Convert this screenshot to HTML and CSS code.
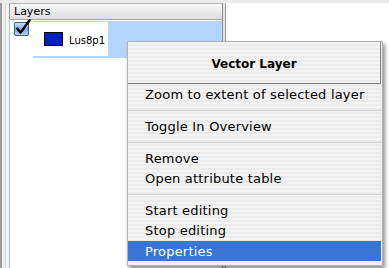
FILE: index.html
```html
<!DOCTYPE html>
<html>
<head>
<meta charset="utf-8">
<link rel="stylesheet" href="styles.css">
</head>
<body>
<div class="screen">
  <div class="topbar"></div>
  <div class="main">
    <div class="edge"></div>
    <div class="panel">
      <div class="panel-head">Layers</div>
      <div class="panel-body">
        <div class="tree-row">
          <svg class="check" width="19" height="19" viewBox="0 0 19 19">
            <defs>
              <linearGradient id="cb" x1="0" y1="0" x2="0" y2="1">
                <stop offset="0" stop-color="#d6e6fa"/>
                <stop offset="0.5" stop-color="#7eaae4"/>
                <stop offset="1" stop-color="#b9d6f6"/>
              </linearGradient>
            </defs>
            <rect x="0.5" y="3.5" width="14" height="13" rx="1.5" fill="url(#cb)" stroke="#3d5a86"/>
            <path d="M3.2 9.6 L6.6 13.6 L15.6 1.2" fill="none" stroke="#000" stroke-width="2.4" stroke-linecap="round" stroke-linejoin="round"/>
          </svg>
          <div class="layer-sel">
            <div class="layer-item">
              <span class="swatch"></span>
              <span class="label">Lus8p1</span>
            </div>
          </div>
        </div>
      </div>
    </div>
    <div class="splitter"></div>
    <div class="canvas"></div>
  </div>

  <div class="menu">
    <div class="menu-title">Vector Layer</div>
    <div class="menu-item">Zoom to extent of selected layer</div>
    <div class="menu-sep"></div>
    <div class="menu-item">Toggle In Overview</div>
    <div class="menu-sep"></div>
    <div class="menu-item">Remove</div>
    <div class="menu-item">Open attribute table</div>
    <div class="menu-sep"></div>
    <div class="menu-item">Start editing</div>
    <div class="menu-item">Stop editing</div>
    <div class="menu-item active">Properties</div>
  </div>
</div>
</body>
</html>
```

FILE: styles.css
```css
html, body {
  margin: 0;
  padding: 0;
}
body {
  width: 389px;
  height: 268px;
  overflow: hidden;
  font-family: "DejaVu Sans", Verdana, sans-serif;
  background: #ececec;
}
.screen {
  position: relative;
  width: 389px;
  height: 268px;
  display: flex;
  flex-direction: column;
}
.topbar {
  height: 3px;
  background: #ececec;
  flex: none;
}
.main {
  flex: 1;
  display: flex;
  min-height: 0;
}
.edge {
  width: 9px;
  flex: none;
  background:
    linear-gradient(to right, #9c9c9c 0 2px, #ededed 2px 5px, #d8d8d8 5px 6px, #f1f1f1 6px 9px);
}
.panel {
  width: 213px;
  flex: none;
  display: flex;
  flex-direction: column;
  border-right: 1px solid #8c8c8c;
}
.panel-head {
  height: 15px;
  border-top: 1px solid #b4b4b4;
  border-bottom: 1px solid #a6a6a6;
  border-left: 1px solid #9a9a9a;
  background: linear-gradient(#fbfbfb, #e8e8e8 60%, #dedede);
  font-size: 11px;
  line-height: 15px;
  padding-left: 4px;
  color: #000;
}
.panel-body {
  flex: 1;
  background: #fff;
  border-left: 1px solid #aac3dd;
  padding-top: 1px;
}
.tree-row {
  display: flex;
  align-items: flex-start;
  padding-left: 4px;
}
.check {
  flex: none;
  margin-top: -2px;
  width: 19px;
  height: 19px;
}
.layer-sel {
  flex: 1;
  height: 37px;
  background: #b5d4ff;
  padding-top: 1px;
  box-sizing: border-box;
}
.layer-item {
  width: 75px;
  height: 34px;
  background: #fff;
  display: flex;
  align-items: center;
  padding-left: 11px;
  box-sizing: border-box;
}
.swatch {
  width: 17px;
  height: 12px;
  border: 1px solid #000;
  background: #0021b5;
  flex: none;
  margin-top: -1px;
}
.label {
  font-size: 10px;
  margin-left: 6px;
  margin-top: 3px;
  color: #000;
}
.splitter {
  width: 3px;
  flex: none;
  background: linear-gradient(to right, #e4e4e4 0 2px, #9c9c9c 2px 3px);
}
.canvas {
  flex: 1;
  background: #fff;
}

/* context menu */
.menu {
  position: absolute;
  left: 127px;
  top: 41px;
  width: 256px;
  height: 225px;
  box-sizing: border-box;
  border: 1px solid #b2b2b2;
  background: repeating-linear-gradient(#f3f3f3 0 2px, #ebebeb 2px 4px);
  box-shadow: 2px 3px 4px rgba(0, 0, 0, 0.45);
  display: flex;
  flex-direction: column;
}
.menu-title {
  height: 42px;
  box-sizing: border-box;
  border-right: 1px solid #858585;
  border-bottom: 1px solid #7d7d7d;
  margin-right: 1px;
  display: flex;
  align-items: center;
  justify-content: center;
  font-weight: bold;
  font-size: 12px;
  color: #000;
  padding-top: 2px;
}
.menu-item {
  height: 20px;
  line-height: 21px;
  padding-left: 17px;
  font-size: 13px;
  letter-spacing: 0.2px;
  color: #000;
  white-space: nowrap;
}
.menu-sep {
  height: 12px;
  flex: none;
  background: linear-gradient(transparent 0 6px, #d2d2d2 6px 7px, transparent 7px);
}
.menu-item.active {
  background: #3b75d4;
  color: #fff;
  margin-top: 1px;
  margin-right: 1px;
}
```
